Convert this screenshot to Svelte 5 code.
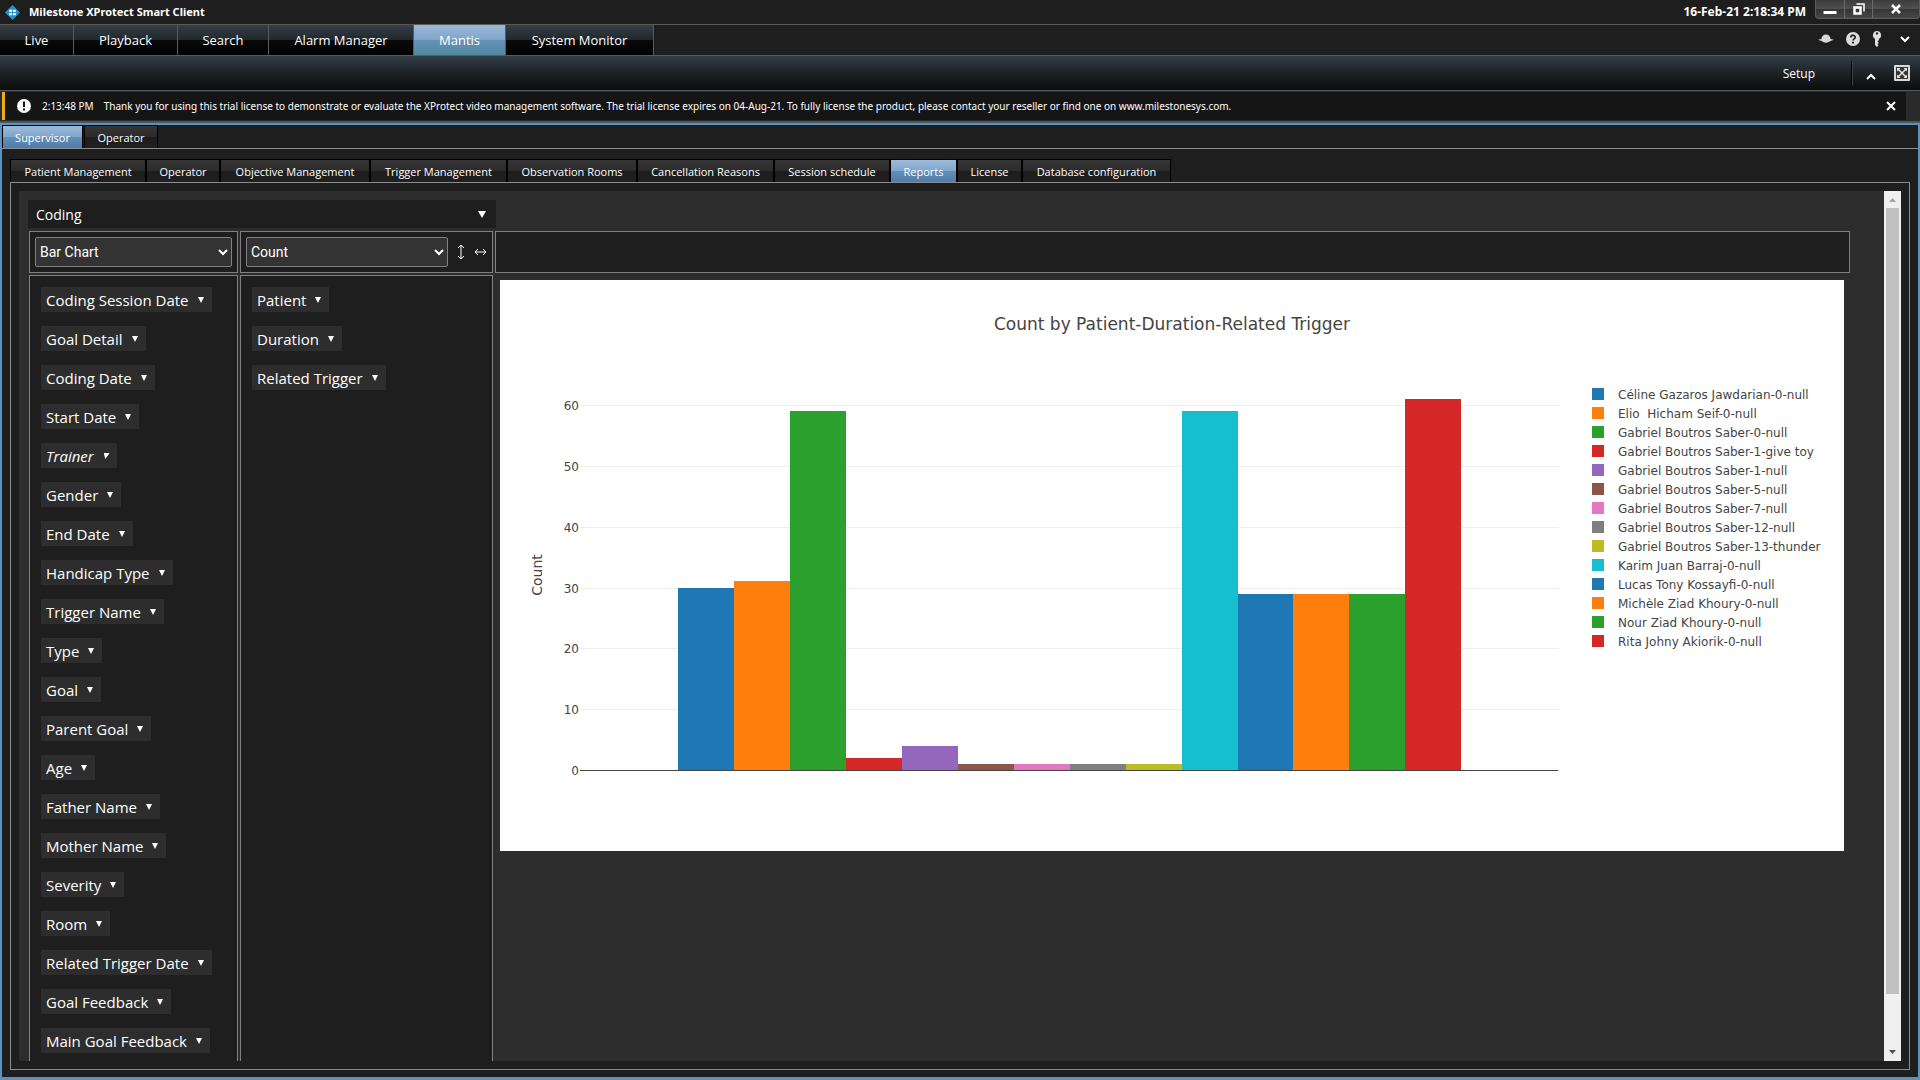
<script>
  const mainTabs = [
    { label: 'Live', width: 74 },
    { label: 'Playback', width: 104 },
    { label: 'Search', width: 91 },
    { label: 'Alarm Manager', width: 145 },
    { label: 'Mantis', width: 92 },
    { label: 'System Monitor', width: 148 }
  ];
  const roleTabs = [
    { label: 'Supervisor', width: 81 },
    { label: 'Operator', width: 74 }
  ];
  const pageTabs = [
    { label: 'Patient Management', width: 136 },
    { label: 'Operator', width: 74 },
    { label: 'Objective Management', width: 150 },
    { label: 'Trigger Management', width: 137 },
    { label: 'Observation Rooms', width: 130 },
    { label: 'Cancellation Reasons', width: 137 },
    { label: 'Session schedule', width: 116 },
    { label: 'Reports', width: 67 },
    { label: 'License', width: 65 },
    { label: 'Database configuration', width: 149 }
  ];
  const unusedFields = [
    'Coding Session Date', 'Goal Detail', 'Coding Date', 'Start Date', 'Trainer', 'Gender', 'End Date',
    'Handicap Type', 'Trigger Name', 'Type', 'Goal', 'Parent Goal', 'Age', 'Father Name', 'Mother Name',
    'Severity', 'Room', 'Related Trigger Date', 'Goal Feedback', 'Main Goal Feedback'
  ];
  const rowFields = ['Patient', 'Duration', 'Related Trigger'];
  const filtered = ['Trainer'];

  const palette = ['#1f77b4', '#ff7f0e', '#2ca02c', '#d62728', '#9467bd', '#8c564b', '#e377c2', '#7f7f7f', '#bcbd22', '#17becf'];
  const series = [
    ['Céline Gazaros Jawdarian-0-null', 30],
    ['Elio  Hicham Seif-0-null', 31],
    ['Gabriel Boutros Saber-0-null', 59],
    ['Gabriel Boutros Saber-1-give toy', 2],
    ['Gabriel Boutros Saber-1-null', 4],
    ['Gabriel Boutros Saber-5-null', 1],
    ['Gabriel Boutros Saber-7-null', 1],
    ['Gabriel Boutros Saber-12-null', 1],
    ['Gabriel Boutros Saber-13-thunder', 1],
    ['Karim Juan Barraj-0-null', 59],
    ['Lucas Tony Kossayfi-0-null', 29],
    ['Michèle Ziad Khoury-0-null', 29],
    ['Nour Ziad Khoury-0-null', 29],
    ['Rita Johny Akiorik-0-null', 61]
  ].map(([name, value], i) => ({ name, value, color: palette[i % palette.length] }));

  const ticks = [0, 10, 20, 30, 40, 50, 60];
  const baseline = 490;
  const y = (v) => Math.round(baseline - v * 6.083);
  const x = (i) => 178 + Math.round(i * 55.95);

  let mainTab = $state('Mantis');
  let roleTab = $state('Supervisor');
  let pageTab = $state('Reports');
</script>

{#snippet chips(fields)}
  <ul class="chips">
    {#each fields as field}
      <li>
        <button type="button" class="chip" class:filtered={filtered.includes(field)}>
          {field}
          <svg class="tri" viewBox="0 0 6 6" aria-hidden="true"><path d="M0 0h6L3 6z" /></svg>
        </button>
      </li>
    {/each}
  </ul>
{/snippet}

{#snippet chevron()}
  <svg class="chevron" viewBox="0 0 10 7" aria-hidden="true"><path d="M1 1l4 4 4-4" /></svg>
{/snippet}

<div class="app">
  <header class="titlebar">
    <svg class="logo" viewBox="0 0 16 16" aria-hidden="true">
      <path d="M8 0l8 8-8 8-8-8z" fill="#1b94d2" />
      <path d="M4.500 5h3v2.500h-3zM8.500 5h3v2.500h-3zM4.500 8.500h3V11h-3zM8.500 8.500h3V11h-3z" fill="#fff" />
    </svg>
    <h1>Milestone XProtect Smart Client</h1>
    <time>16-Feb-21 2:18:34 PM</time>
    <div class="window-buttons">
      <button type="button" aria-label="Minimize"><svg width="14" height="12" viewBox="0 0 14 12"><path d="M0.500 8h13v3h-13z" fill="#fff" /></svg></button>
      <button type="button" aria-label="Restore"><svg width="12" height="12" viewBox="0 0 12 12" fill="none" stroke="#fff"><path d="M3.500 1h7.500v7.500" stroke-width="1.500" /><path d="M1.500 4.500h6v6h-6z" stroke-width="2.500" /></svg></button>
      <button type="button" class="wide" aria-label="Close"><svg width="10" height="10" viewBox="0 0 10 10" fill="none" stroke="#fff" stroke-width="2.500"><path d="M1 1l8 8M9 1L1 9" /></svg></button>
    </div>
  </header>

  <nav class="main-nav" aria-label="Workspaces">
    <div class="main-tabs">
      {#each mainTabs as tab}
        <button type="button" class="main-tab" class:active={mainTab === tab.label} style:width="{tab.width}px" onclick={() => (mainTab = tab.label)}>{tab.label}</button>
      {/each}
    </div>
    <div class="tools">
      <button type="button" aria-label="Status"><svg width="16" height="10" viewBox="0 0 16 10"><path d="M3.500 5a4.500 4.500 0 0 1 9 0l3.500.8-3.500 1.200Q8 10.500 3.500 7L0 5.800z" fill="#d8d8d8" /></svg></button>
      <button type="button" aria-label="Help"><svg width="14" height="14" viewBox="0 0 14 14"><circle cx="7" cy="7" r="7" fill="#dcdcdc" /><path d="M4.800 5.400c0-3 4.600-2.800 4.400 0C9.100 6.900 7 6.800 7 8.600" fill="none" stroke="#222" stroke-width="1.700" /><path d="M6 9.700h2v1.800H6z" fill="#222" /></svg></button>
      <button type="button" aria-label="Key"><svg width="10" height="16" viewBox="0 0 10 16"><path d="M5 0a4.200 4.200 0 0 0-2 7.800V14l2 2 1.500-1.500L5.500 13l1.500-1-1.500-1.500L7 9V7.800A4.200 4.200 0 0 0 5 0zm0 1.200a1.200 1.200 0 1 1 0 2.400 1.200 1.200 0 0 1 0-2.400z" fill="#e0e0e0" fill-rule="evenodd" /></svg></button>
      <button type="button" aria-label="More">{@render chevron()}</button>
    </div>
  </nav>

  <div class="toolbar">
    <button type="button" class="setup">Setup</button>
    <button type="button" class="collapse" aria-label="Collapse"><svg class="chevron" viewBox="0 0 10 7" aria-hidden="true"><path d="M1 6l4-4 4 4" /></svg></button>
    <button type="button" aria-label="Full screen">
      <svg width="16" height="16" viewBox="0 0 16 16"><rect width="16" height="16" rx="1" fill="#d8d8d8" /><path d="M2 2h12v12H2z" fill="#333" /><path d="M3.500 3.500l9 9M12.500 3.500l-9 9" stroke="#e4e4e4" stroke-width="1.500" /><path d="M3 3h3.500L3 6.500zM13 3v3.500L9.500 3zM3 13V9.500L6.500 13zM13 13H9.500L13 9.500z" fill="#e4e4e4" /></svg>
    </button>
  </div>

  <div class="notice-row">
    <div class="notice" role="status">
      <svg width="14" height="14" viewBox="0 0 14 14" aria-hidden="true"><circle cx="7" cy="7" r="7" fill="#fff" /><path d="M6 2.500h2v5.500H6zM6 9.500h2v2H6z" fill="#151515" /></svg>
      <span class="notice-time">2:13:48 PM</span>
      <span>Thank you for using this trial license to demonstrate or evaluate the XProtect video management software. The trial license expires on 04-Aug-21. To fully license the product, please contact your reseller or find one on www.milestonesys.com.</span>
      <button type="button" aria-label="Dismiss"><svg width="10" height="10" viewBox="0 0 10 10" fill="none" stroke="#fff" stroke-width="2"><path d="M1 1l8 8M9 1L1 9" /></svg></button>
    </div>
  </div>

  <main class="workspace">
    <div class="tabs role-tabs">
      {#each roleTabs as tab}
        <button type="button" class="tab" class:active={roleTab === tab.label} style:width="{tab.width}px" onclick={() => (roleTab = tab.label)}>{tab.label}</button>
      {/each}
    </div>
    <div class="page">
      <div class="tabs">
        {#each pageTabs as tab}
          <button type="button" class="tab" class:active={pageTab === tab.label} style:width="{tab.width}px" onclick={() => (pageTab = tab.label)}>{tab.label}</button>
        {/each}
      </div>
      <div class="panel">
        <div class="scroll-view">
          <button type="button" class="source">Coding <svg class="source-arrow" viewBox="0 0 8 7" aria-hidden="true"><path d="M0 0h8L4 7z" /></svg></button>
          <div class="pivot">
            <div class="cell controls">
              <div class="select">
                <select aria-label="Chart type"><option>Bar Chart</option><option>Table</option></select>
                {@render chevron()}
              </div>
            </div>
            <div class="cell controls">
              <div class="select">
                <select aria-label="Aggregator"><option>Count</option><option>Sum</option></select>
                {@render chevron()}
              </div>
              <button type="button" aria-label="Row order"><svg width="8" height="16" viewBox="0 0 8 16"><path d="M4 1v14M1 4l3-3 3 3M1 12l3 3 3-3" /></svg></button>
              <button type="button" aria-label="Column order"><svg width="13" height="8" viewBox="0 0 13 8"><path d="M1 4h11M4 1L1 4l3 3M9 1l3 3-3 3" /></svg></button>
            </div>
            <div class="cell"></div>
            <div class="cell list">{@render chips(unusedFields)}</div>
            <div class="cell list">{@render chips(rowFields)}</div>
            <div class="output">
              <svg class="chart" viewBox="0 0 1344 571" role="img" aria-label="Count by Patient-Duration-Related Trigger">
                <rect width="1344" height="571" fill="#fff" />
                <text class="chart-title" x="672" y="50" text-anchor="middle">Count by Patient-Duration-Related Trigger</text>
                {#each ticks as t}
                  {#if t > 0}<rect x="80" y={y(t)} width="979" height="1" fill="#eee" />{/if}
                  <text x="79" y={y(t) + 5} text-anchor="end">{t}</text>
                {/each}
                <text class="axis-title" transform="translate(42 295) rotate(-90)" text-anchor="middle">Count</text>
                {#each series as s, i}
                  <rect x={x(i)} y={y(s.value)} width={x(i + 1) - x(i)} height={baseline - y(s.value)} fill={s.color} />
                {/each}
                <rect x="80" y={baseline} width="978" height="1" fill="#444" />
                {#each series as s, i}
                  <rect x="1092" y={108 + i * 19} width="12" height="12" fill={s.color} />
                  <text x="1118" y={119 + i * 19}>{s.name}</text>
                {/each}
              </svg>
            </div>
          </div>
        </div>
        <div class="scrollbar" aria-hidden="true">
          <svg width="17" height="17" viewBox="0 0 17 17"><path d="M5 11h7L8.500 7z" fill="#a3a3a3" /></svg>
          <div class="track"><div class="thumb"></div></div>
          <svg width="17" height="17" viewBox="0 0 17 17"><path d="M5 6h7l-3.500 4z" fill="#505050" /></svg>
        </div>
      </div>
    </div>
  </main>
</div>

<style>
  :global(body) { margin: 0; background: #1e1e1e; }
  .app, .app :global(*) { box-sizing: border-box; }
  .app {
    display: flex;
    flex-direction: column;
    height: 100vh;
    overflow: hidden;
    background: #1e1e1e;
    color: #fff;
    font-family: 'Open Sans', 'Noto Sans', sans-serif;
    font-size: 11px;
  }
  button {
    display: flex;
    align-items: center;
    justify-content: center;
    padding: 0;
    border: 0;
    background: none;
    color: inherit;
    font: inherit;
    white-space: nowrap;
  }
  svg { display: block; flex: none; }
  .chevron { width: 10px; height: 7px; fill: none; stroke: #fff; stroke-width: 2; }

  .titlebar { display: flex; align-items: center; height: 25px; padding: 0 0 0 5px; border-bottom: 1px solid #5a5a5a; flex: none; }
  .logo { width: 15px; height: 15px; margin-right: 9px; }
  h1 { margin: 0; font: bold 11px/24px 'Noto Sans', sans-serif; }
  time { margin-left: auto; margin-right: 9px; font: bold 12px/24px 'Noto Sans', sans-serif; }
  .window-buttons {
    display: flex;
    align-self: flex-start;
    height: 19px;
    border: 1px solid #5c5c5c;
    border-top: 0;
    border-radius: 0 0 4px 4px;
    background: linear-gradient(#3c3c3c, #505050 50%, #353535 52%, #484848);
  }
  .window-buttons button { width: 28px; }
  .window-buttons button + button { border-left: 1px solid #6a6a6a; }
  .window-buttons .wide { width: 47px; }

  .main-nav { display: flex; justify-content: space-between; height: 31px; border-bottom: 1px solid #5a5a5a; flex: none; }
  .main-tabs { display: flex; }
  .main-tab {
    border-right: 1px solid #5a5a5a;
    background: linear-gradient(#353f46, #20282d 49%, #0a0a0a 50%, #000);
    font-size: 13px;
  }
  .main-tab.active { background: linear-gradient(#9cb8d8, #7fa5c8 49%, #6792b5 50%, #4f88a2); }
  .tools { display: flex; align-items: center; gap: 12px; padding: 0 10px 2px 0; }
  .tools button:last-child { margin-left: 6px; }

  .toolbar {
    display: flex;
    align-items: center;
    justify-content: flex-end;
    height: 35px;
    padding-right: 10px;
    border-bottom: 1px solid #5a5a5a;
    background: linear-gradient(#333e46, #1d2226 50%, #0c0c0d);
    flex: none;
  }
  .setup { margin-right: 37px; font-size: 12px; }
  .collapse { width: 42px; height: 24px; padding: 6px 6px 0 0; border-left: 1px solid #3c4246; box-shadow: -1px 0 #000; }

  .notice-row { height: 32px; padding: 1px 14px 1px 2px; border-bottom: 2px solid #4d565c; background: #2a2a2a; flex: none; }
  .notice { display: flex; align-items: center; height: 28px; padding: 0 10px 0 12px; border-left: 3px solid #e9ae1e; background: #151515; font: 10px/28px 'Noto Sans', sans-serif; white-space: nowrap; }
  .notice-time { margin: 0 10px 0 11px; }
  .notice button { margin-left: auto; }

  .workspace {
    display: flex;
    flex: 1;
    flex-direction: column;
    min-height: 0;
    border: 2px solid #5b92c0;
    border-bottom-width: 3px;
  }
  .tabs { display: flex; flex: none; height: 24px; border-bottom: 1px solid #8c8c8c; }
  .tab {
    border: solid #000;
    border-width: 1px 1px 0;
    background: linear-gradient(#363636, #2b2b2b 49%, #1d1d1d 50%, #202020);
  }
  .tab.active { background: linear-gradient(#9dbbda, #7fa6cc 49%, #6490b8 50%, #4f7ca8); }
  .role-tabs { gap: 1px; }
  .page { display: flex; flex: 1; flex-direction: column; min-height: 0; padding: 10px 8px 7px; }
  .panel { display: flex; flex: 1; min-height: 0; padding: 8px; border: 1px solid #8c8c8c; border-top: 0; }
  .scroll-view { display: flex; flex: 1; flex-direction: column; min-width: 0; overflow: hidden; padding: 9px 34px 0 9px; background: #2d2d2d; }
  .source { justify-content: space-between; flex: none; width: 468px; height: 28px; padding: 0 10px 0 8px; background: #1e1e1e; font-size: 14px; }
  .source-arrow { width: 8px; height: 7px; fill: #fff; }

  .pivot { display: grid; grid-template-columns: 209px 253px minmax(0, 1fr); grid-template-rows: 42px auto; gap: 2px; padding: 3px 0 0 1px; }
  .cell { border: 1px solid #808080; background: #1e1e1e; }
  .controls { display: flex; align-items: center; gap: 9px; padding: 0 5px; }
  .controls > button svg { fill: none; stroke: #fff; stroke-width: 1; }
  .select { position: relative; flex: 1; }
  .select select {
    display: block;
    width: 100%;
    height: 30px;
    padding: 0 24px 0 4px;
    border: 1px solid #808080;
    border-radius: 2px;
    background: #333;
    color: #fff;
    font: 14px Roboto, sans-serif;
    appearance: none;
  }
  .select .chevron { position: absolute; right: 4px; top: 12px; pointer-events: none; }

  .list { padding: 11px 11px 24px; }
  .chips { display: flex; flex-direction: column; align-items: flex-start; gap: 14px; margin: 0; padding: 0; list-style: none; }
  .chip { gap: 9px; height: 25px; padding: 0 8px 0 5px; background: #2d2d2d; font-size: 15px; }
  .chip.filtered { font-style: italic; }
  .filtered .tri { transform: skewX(-14deg); }
  .tri { width: 6px; height: 6px; fill: #fff; }

  .output { padding: 5px 6px 5px 5px; }
  .chart { width: 100%; height: auto; font-family: 'DejaVu Sans', Verdana, sans-serif; }
  .chart text { fill: #444; font-size: 12px; white-space: pre; }
  .chart .chart-title { font-size: 17px; }
  .chart .axis-title { font-size: 14px; }

  .scrollbar { display: flex; flex: none; flex-direction: column; width: 17px; background: #f0f0f0; }
  .track { flex: 1; padding: 0 2px; }
  .thumb { height: 94%; background: #c1c1c1; }
</style>
